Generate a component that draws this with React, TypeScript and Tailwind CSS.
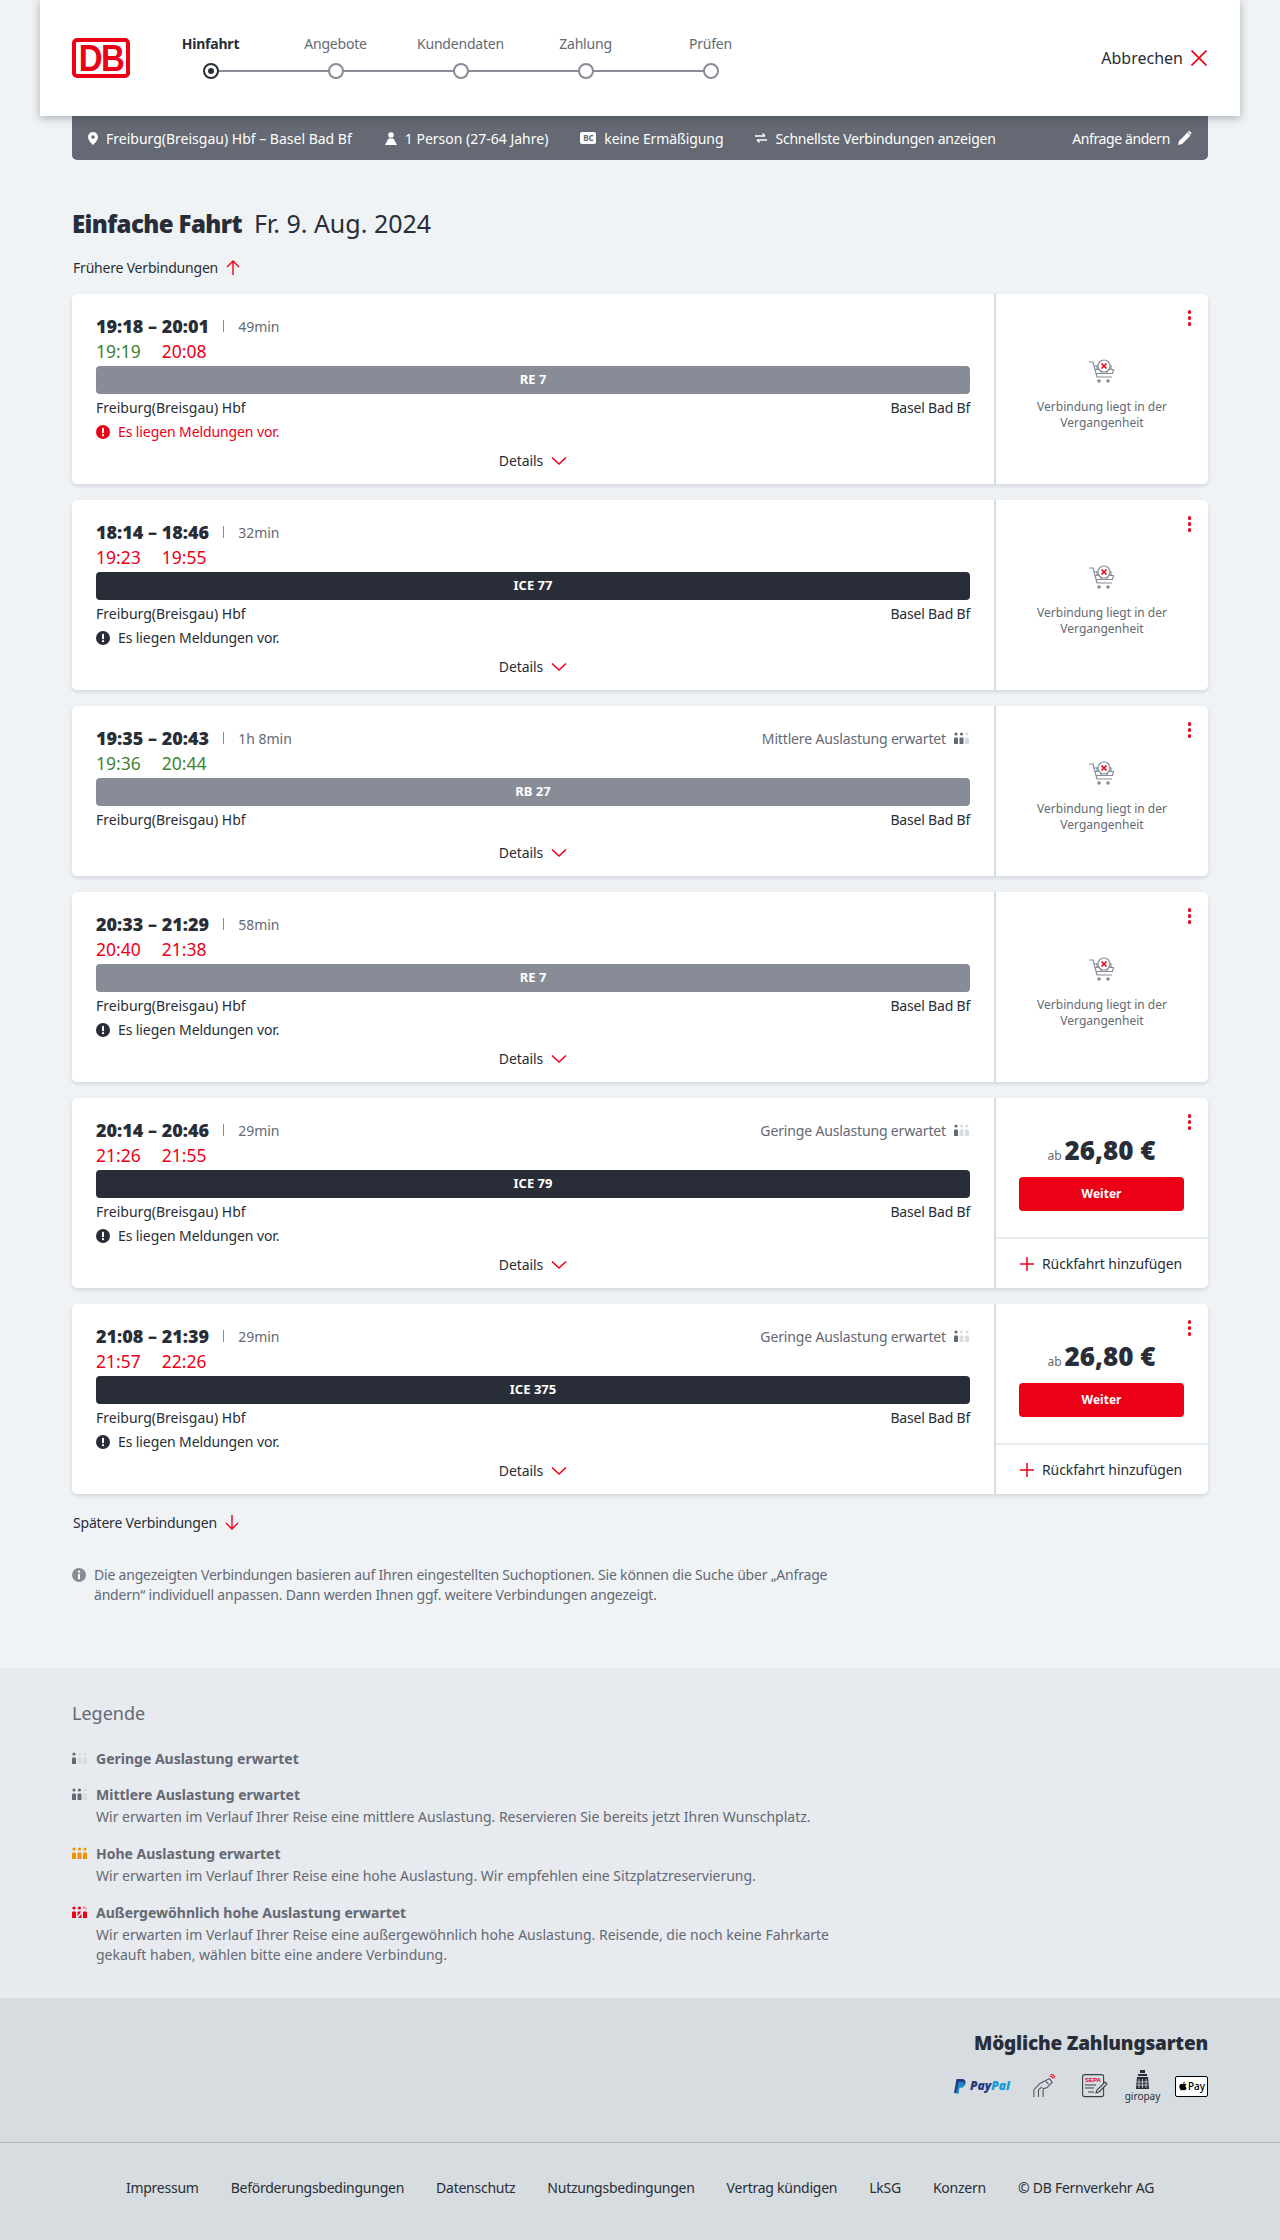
import React from "react";
import { FaApple } from "react-icons/fa";

const FONT = "font-['Noto_Sans','Open_Sans',sans-serif]";

function Occ({ level, className = "" }: { level: 0 | 1 | 2 | 3; className?: string }) {
  const on = level === 2 ? "#f39200" : level === 3 ? "#ec0016" : "#646973";
  const off = "#d7dce1";
  const count = level === 0 ? 1 : level === 1 ? 2 : 3;
  const p = (x: number, c: string) => (
    <g key={x} fill={c}>
      <circle cx={x + 2} cy={2} r={1.6} />
      <path d={`M${x} 6.6a1 1 0 0 1 1-1h2a1 1 0 0 1 1 1V12H${x}z`} />
    </g>
  );
  return (
    <svg width="16" height="12" viewBox="0 0 16 12" className={`shrink-0 ${className}`}>
      {[0, 5.5, 11].map((x, i) => p(x, i < count ? on : off))}
      {level === 3 && <path d="M15 0 L5 12" stroke="#e7eaef" strokeWidth="1.6" />}
    </svg>
  );
}

function Chevron() {
  return (
    <svg width="16" height="10" viewBox="0 0 16 10" fill="none" stroke="#ec0016" strokeWidth="1.6">
      <path d="M1 1.5l7 6.5 7-6.5" />
    </svg>
  );
}

function Kebab() {
  return (
    <div className="absolute right-[17px] top-[16px] flex flex-col gap-[2.5px]">
      <span className="w-[3.5px] h-[3.5px] rounded-full bg-[#ec0016]" />
      <span className="w-[3.5px] h-[3.5px] rounded-full bg-[#ec0016]" />
      <span className="w-[3.5px] h-[3.5px] rounded-full bg-[#ec0016]" />
    </div>
  );
}

function Cart() {
  return (
    <svg width="28" height="26" viewBox="0 0 28 26" fill="none" stroke="#878c96" strokeWidth="1.2">
      <path d="M1 3h4l4 15h15" />
      <path d="M6 7h3M6.5 10.5h19l-1 4H8" />
      <path d="M9 10V7l3-1M20 6l3 1v3" />
      <path d="M13 14v-3M19 14v-3" />
      <circle cx="16" cy="7" r="6" fill="#fff" />
      <circle cx="11" cy="22" r="1.8" fill="#878c96" stroke="none" />
      <circle cx="20" cy="22" r="1.8" fill="#878c96" stroke="none" />
      <path d="M13.5 4.5l5 5M18.5 4.5l-5 5" stroke="#ec0016" strokeWidth="1.6" />
    </svg>
  );
}

type J = {
  t: string; dur: string; a: string; b: string; ag?: boolean; bg?: boolean;
  train: string; dark?: boolean; msg?: "red" | "dark"; occ?: [string, 0 | 1]; price?: boolean;
};

function Card({ j }: { j: J }) {
  return (
    <div className="flex bg-white rounded-[5px] shadow-[0_2px_4px_rgba(40,45,55,0.14)]">
      <div className="w-[924px] shrink-0 px-6 pt-[20px] pb-[13px] border-r-2 border-[#d7dce1]">
        <div className="flex items-center h-6">
          <span className="text-[18px] font-black text-[#282d37] leading-6">{j.t}</span>
          <span className="mx-[14px] w-px h-3 bg-[#878c96]" />
          <span className="text-[14px] text-[#646973]">{j.dur}</span>
          {j.occ && (
            <span className="ml-auto flex items-center gap-2 text-[14px] text-[#646973] tracking-[-0.15px]">
              {j.occ[0]} <Occ level={j.occ[1]} />
            </span>
          )}
        </div>
        <div className="flex gap-[21px] text-[17.5px] leading-6 h-6 mt-px">
          <span className={j.ag ? "text-[#408335]" : "text-[#ec0016]"}>{j.a}</span>
          <span className={j.bg ? "text-[#408335]" : "text-[#ec0016]"}>{j.b}</span>
        </div>
        <div className={`mt-[3px] h-7 rounded-[4px] flex items-center justify-center text-white text-[13px] font-bold ${j.dark ? "bg-[#282d37]" : "bg-[#878c96]"}`}>
          {j.train}
        </div>
        <div className="flex justify-between text-[14px] leading-5 text-[#282d37] mt-1">
          <span>Freiburg(Breisgau) Hbf</span>
          <span className="tracking-[-0.2px]">Basel Bad Bf</span>
        </div>
        {j.msg && (
          <div className={`flex items-center gap-2 text-[14px] leading-5 mt-1 tracking-[-0.1px] ${j.msg === "red" ? "text-[#ec0016]" : "text-[#282d37]"}`}>
            <svg width="14" height="14" viewBox="0 0 14 14">
              <circle cx="7" cy="7" r="7" fill="currentColor" />
              <rect x="6" y="2.8" width="2" height="5.4" rx="0.8" fill="#fff" />
              <circle cx="7" cy="10.2" r="1.1" fill="#fff" />
            </svg>
            Es liegen Meldungen vor.
          </div>
        )}
        <div className={`flex items-center justify-center gap-2 text-[14px] leading-5 text-[#282d37] tracking-[-0.1px] ${j.msg ? "mt-[9px]" : "mt-[13px]"}`}>
          Details <Chevron />
        </div>
      </div>
      <div className="relative w-[212px] flex flex-col">
        <Kebab />
        {j.price ? (
          <>
            <div className="h-[141px] pt-[38px] pl-[23px] pr-6 border-b-2 border-[#e7eaef]">
              <div className="flex items-baseline justify-center gap-[3px] h-7 leading-7 text-[#282d37]">
                <span className="text-[12px] text-[#646973]">ab</span>
                <span className="text-[26px] font-black">26,80 €</span>
              </div>
              <div className="mt-[13px] h-[34px] rounded-[4px] bg-[#ec0016] flex items-center justify-center text-white text-[12px] font-bold">
                Weiter
              </div>
            </div>
            <div className="flex-1 flex items-center pl-6 gap-[8px] text-[14px] text-[#282d37] tracking-[-0.1px]">
              <svg width="14" height="14" viewBox="0 0 14 14" stroke="#ec0016" strokeWidth="1.5"><path d="M7 0v14M0 7h14" /></svg>
              Rückfahrt hinzufügen
            </div>
          </>
        ) : (
          <div className="flex-1 flex flex-col items-center justify-center pt-3">
            <Cart />
            <div className="mt-[14px] text-[12px] leading-[16px] text-[#646973] text-center w-[170px]">
              Verbindung liegt in der Vergangenheit
            </div>
          </div>
        )}
      </div>
    </div>
  );
}

const journeys: J[] = [
  { t: "19:18 – 20:01", dur: "49min", a: "19:19", ag: true, b: "20:08", train: "RE 7", msg: "red" },
  { t: "18:14 – 18:46", dur: "32min", a: "19:23", b: "19:55", train: "ICE 77", dark: true, msg: "dark" },
  { t: "19:35 – 20:43", dur: "1h 8min", a: "19:36", ag: true, b: "20:44", bg: true, train: "RB 27", occ: ["Mittlere Auslastung erwartet", 1] },
  { t: "20:33 – 21:29", dur: "58min", a: "20:40", b: "21:38", train: "RE 7", msg: "dark" },
  { t: "20:14 – 20:46", dur: "29min", a: "21:26", b: "21:55", train: "ICE 79", dark: true, msg: "dark", occ: ["Geringe Auslastung erwartet", 0], price: true },
  { t: "21:08 – 21:39", dur: "29min", a: "21:57", b: "22:26", train: "ICE 375", dark: true, msg: "dark", occ: ["Geringe Auslastung erwartet", 0], price: true },
];

const steps = ["Hinfahrt", "Angebote", "Kundendaten", "Zahlung", "Prüfen"];

function Stepper() {
  return (
    <div className="flex">
      {steps.map((s, i) => (
        <div key={s} className="relative w-[125px] flex flex-col items-center">
          <span className={`text-[14px] leading-5 tracking-[-0.2px] ${i === 0 ? "font-bold text-[#282d37]" : "text-[#646973]"}`}>{s}</span>
          <span className={`relative z-10 mt-[9px] w-4 h-4 rounded-full bg-white border-2 flex items-center justify-center ${i === 0 ? "border-[#282d37]" : "border-[#878c96]"}`}>
            {i === 0 && <span className="w-[6px] h-[6px] rounded-full bg-[#282d37]" />}
          </span>
          {i < 4 && <span className="absolute left-1/2 top-[36px] w-[125px] h-[2px] bg-[#878c96]" />}
        </div>
      ))}
    </div>
  );
}

function Legend({ level, title, children }: { level: 0 | 1 | 2 | 3; title: string; children?: React.ReactNode }) {
  return (
    <div>
      <div className="flex items-center gap-2 h-5 text-[14px] font-bold text-[#646973]">
        <Occ level={level} /> {title}
      </div>
      {children && <div className="ml-6 mt-[3px] text-[14px] leading-5 text-[#646973] w-[760px]">{children}</div>}
    </div>
  );
}

export default function App() {
  return (
    <div className={`${FONT} bg-[#eff3f6] text-[#282d37] w-[1280px] h-[2240px] overflow-hidden flex flex-col`}>
      <header className="relative z-20 mx-10 h-[116px] shrink-0 bg-white shadow-[0_2px_8px_rgba(40,45,55,0.35)] flex items-center pl-8 pr-[33px]">
        <div className="w-[58px] h-10 shrink-0 rounded-[5px] border-[4px] border-[#ec0016] bg-white flex items-center justify-center overflow-hidden">
          <span className="font-['Liberation_Sans',sans-serif] font-bold text-[33px] leading-none text-[#ec0016] tracking-[-1.5px] scale-y-110">DB</span>
        </div>
        <div className="ml-[18px] self-start pt-[34px]">
          <Stepper />
        </div>
        <div className="ml-auto flex items-center gap-2 text-[16px]">
          Abbrechen
          <svg width="16" height="16" viewBox="0 0 16 16" stroke="#ec0016" strokeWidth="1.6"><path d="M.5.5l15 15M15.5.5l-15 15" /></svg>
        </div>
      </header>

      <div className="mx-[72px] h-11 shrink-0 bg-[#646973] rounded-b-[5px] flex items-center pl-4 pr-4 text-[14px] text-white">
        <svg width="10" height="13" viewBox="0 0 10 13" fill="#fff"><path fillRule="evenodd" d="M5 0a5 5 0 0 1 5 5c0 3-3 6-5 8-2-2-5-5-5-8a5 5 0 0 1 5-5zm0 3.2a1.8 1.8 0 1 0 0 3.6 1.8 1.8 0 0 0 0-3.6z" /></svg>
        <span className="ml-2">Freiburg(Breisgau) Hbf – Basel Bad Bf</span>
        <svg className="ml-[33px]" width="12" height="13" viewBox="0 0 12 13" fill="#fff"><circle cx="6" cy="3" r="2.8" /><path d="M3.5 6.5h5L12 13H0z" /></svg>
        <span className="ml-2">1 Person (27-64 Jahre)</span>
        <span className="ml-[32px] w-4 h-3 rounded-[2px] bg-white text-[#646973] text-[8px] font-bold leading-3 text-center">BC</span>
        <span className="ml-2 tracking-[-0.1px]">keine Ermäßigung</span>
        <svg className="ml-8" width="12" height="10" viewBox="0 0 12 10" fill="none" stroke="#fff" strokeWidth="1.4"><path d="M0 3h10M7.5.5L10 3M12 7H2M4.5 9.5L2 7" /></svg>
        <span className="ml-2 tracking-[-0.22px]">Schnellste Verbindungen anzeigen</span>
        <span className="ml-auto tracking-[-0.4px]">Anfrage ändern</span>
        <svg className="ml-2" width="14" height="14" viewBox="0 0 14 14" fill="#fff"><path d="M0 14l1-4L9.5 1.500l3 3L4 13zM10.500.5l1-.5 2 2-.5 1-.5.5-3-3z" /></svg>
      </div>

      <main className="px-[72px] shrink-0 h-[1508px]">
        <div className="mt-[47px] flex items-baseline gap-[12px] h-8 leading-8">
          <h1 className="text-[24px] font-black tracking-[-0.6px]">Einfache Fahrt</h1>
          <span className="text-[25px]">Fr. 9. Aug. 2024</span>
        </div>
        <div className="mt-[18px] flex items-center gap-2 h-5 text-[14px] ml-px tracking-[-0.2px]">
          Frühere Verbindungen
          <svg width="14" height="15" viewBox="0 0 14 15" fill="none" stroke="#ec0016" strokeWidth="1.4"><path d="M7 15V1M1 7l6-6 6 6" /></svg>
        </div>
        <div className="mt-[17px] flex flex-col gap-4">
          {journeys.map((j, i) => <Card key={i} j={j} />)}
        </div>
        <div className="mt-[18px] flex items-center gap-2 h-5 text-[14px] ml-px tracking-[-0.2px]">
          Spätere Verbindungen
          <svg width="14" height="15" viewBox="0 0 14 15" fill="none" stroke="#ec0016" strokeWidth="1.4"><path d="M7 0v14M1 8l6 6 6-6" /></svg>
        </div>
        <div className="mt-[33px] flex gap-2 text-[14px] leading-5 text-[#646973] tracking-[-0.2px] w-[770px]">
          <svg className="mt-[3px] shrink-0" width="14" height="14" viewBox="0 0 14 14"><circle cx="7" cy="7" r="7" fill="#878c96" /><circle cx="7" cy="3.6" r="1.2" fill="#fff" /><rect x="6" y="5.8" width="2" height="5.4" rx="0.6" fill="#fff" /></svg>
          <p>Die angezeigten Verbindungen basieren auf Ihren eingestellten Suchoptionen. Sie können die Suche über „Anfrage ändern“ individuell anpassen. Dann werden Ihnen ggf. weitere Verbindungen angezeigt.</p>
        </div>
      </main>

      <section className="bg-[#e7eaef] h-[330px] shrink-0 px-[72px] pt-[33px]">
        <h2 className="text-[18px] leading-6 text-[#646973]">Legende</h2>
        <div className="mt-[23px] flex flex-col gap-[16px]">
          <Legend level={0} title="Geringe Auslastung erwartet" />
          <Legend level={1} title="Mittlere Auslastung erwartet">Wir erwarten im Verlauf Ihrer Reise eine mittlere Auslastung. Reservieren Sie bereits jetzt Ihren Wunschplatz.</Legend>
          <Legend level={2} title="Hohe Auslastung erwartet">Wir erwarten im Verlauf Ihrer Reise eine hohe Auslastung. Wir empfehlen eine Sitzplatzreservierung.</Legend>
          <Legend level={3} title="Außergewöhnlich hohe Auslastung erwartet">Wir erwarten im Verlauf Ihrer Reise eine außergewöhnlich hohe Auslastung. Reisende, die noch keine Fahrkarte gekauft haben, wählen bitte eine andere Verbindung.</Legend>
        </div>
      </section>

      <footer className="bg-[#d7dce1] flex-1">
        <div className="h-[145px] px-[72px] pt-[31px] border-b border-[#afb4bb] flex flex-col items-end">
          <div className="text-[19px] font-black leading-7 tracking-[-0.2px]">Mögliche Zahlungsarten</div>
          <div className="mt-[13px] flex items-center h-8">
            <div className="flex items-center gap-[4px] w-[56px] mr-[23px]">
              <svg className="shrink-0" width="12" height="15" viewBox="0 0 12 15"><path d="M2.500 0h5c3 0 4.500 1.500 4 4-.5 3-2.500 4-5 4H5l-1 6H0z" fill="#253b80" /><path d="M4.500 3h4c1.500 0 2.500 1 2 3-.5 2.500-2 3-4 3H5.500l-.8 6H2z" fill="#179bd7" opacity=".8" /></svg>
              <span className="text-[12px] font-black italic text-[#253b80] font-['Open_Sans',sans-serif]">Pay<span className="text-[#179bd7]">Pal</span></span>
            </div>
            <svg className="mr-[27px]" width="22" height="24" viewBox="0 0 24 26" fill="none" stroke="#4a4f58" strokeWidth="1.1">
              <path d="M1 25v-8l7-7 10-5 3 4-6 6-4 1v9" />
              <path d="M6 25v-8l4-3M14 8l3 3" />
              <path d="M18 2a4 4 0 0 1 4 3M19 0a6 6 0 0 1 5 4" stroke="#ec0016" />
            </svg>
            <svg className="mr-[18px]" width="26" height="24" viewBox="0 0 26 24" fill="none">
              <rect x=".6" y=".6" width="21" height="22" rx="2" stroke="#3b4048" strokeWidth="1.1" />
              <text x="11" y="7.500" textAnchor="middle" fontSize="6" fontWeight="800" fill="#ec0016" fontFamily="Liberation Sans">SEPA</text>
              <path d="M3 11h11M3 14h9M6 18h6" stroke="#3b4048" strokeWidth="1.1" />
              <path d="M14 19l1-3 8-8 2 2-8 8z" fill="#d7dce1" stroke="#3b4048" strokeWidth="1.1" />
            </svg>
            <div className="flex flex-col items-center leading-none mt-[-1px] w-[33px] mr-[16px]">
              <svg width="15" height="20" viewBox="0 0 15 20" fill="#282d37"><path d="M5 0h5v3H5zM3 4h9v2H3zM2 7h11l1 12H1z" /><path d="M4 9v9M7.500 9v9M11 9v9M2 12h11M2 15h11" stroke="#d7dce1" strokeWidth=".8" /></svg>
              <span className="text-[10px] mt-[1px] text-[#282d37]">giropay</span>
            </div>
            <div className="w-[33px] h-[21px] bg-white border border-black rounded-[2px] flex items-center justify-center text-[10px] text-black font-medium">
              <FaApple className="w-[10px] h-[10px]" />Pay
            </div>
          </div>
        </div>
        <nav className="flex justify-center gap-8 mt-[35px] text-[14px] leading-5 text-[#282d37] tracking-[-0.25px]">
          {["Impressum", "Beförderungsbedingungen", "Datenschutz", "Nutzungsbedingungen", "Vertrag kündigen", "LkSG", "Konzern", "© DB Fernverkehr AG"].map((l) => (
            <span key={l}>{l}</span>
          ))}
        </nav>
      </footer>
    </div>
  );
}
